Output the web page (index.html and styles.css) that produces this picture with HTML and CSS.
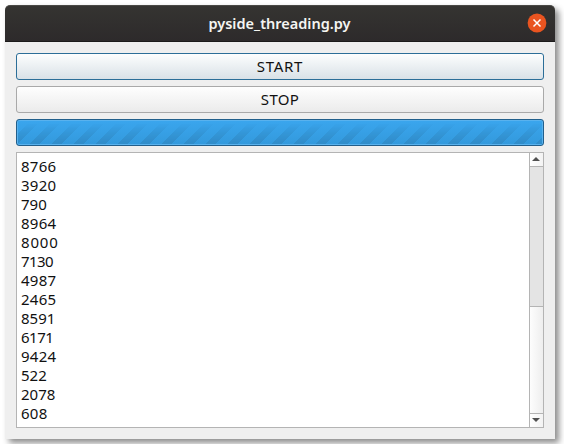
FILE: index.html
```html
<!DOCTYPE html>
<html lang="en">
<head>
<meta charset="utf-8">
<title>pyside_threading.py</title>
<link rel="stylesheet" href="styles.css">
</head>
<body>
<main class="window">
  <header class="titlebar">
    <h1 class="title">pyside_threading.py</h1>
    <button class="close" aria-label="Close"><svg width="20" height="20" viewBox="0 0 20 20"><circle cx="10" cy="10" r="9.4" fill="#e95420"/><path d="M6.5 6.5l7 7M13.5 6.5l-7 7" stroke="#fff" stroke-width="1.5" fill="none"/></svg></button>
  </header>
  <section class="content">
    <button class="button focused">START</button>
    <button class="button">STOP</button>
    <div class="progress"><div class="stripes"></div></div>
    <div class="log">
      <div class="lines">
        <div>8766</div>
        <div>3920</div>
        <div class="tight">790</div>
        <div>8964</div>
        <div class="wide">8000</div>
        <div class="tighter">7130</div>
        <div>4987</div>
        <div>2465</div>
        <div class="tight">8591</div>
        <div class="tightest">6171</div>
        <div>9424</div>
        <div class="tight">522</div>
        <div class="tight">2078</div>
        <div>608</div>
      </div>
      <div class="scrollbar">
        <div class="arrow up"><svg width="8" height="4" viewBox="0 0 8 4"><path d="M0 4L4 0l4 4z" fill="#505050"/></svg></div>
        <div class="groove"></div>
        <div class="handle"></div>
        <div class="arrow down"><svg width="8" height="4" viewBox="0 0 8 4"><path d="M0 0l4 4 4-4z" fill="#505050"/></svg></div>
      </div>
    </div>
  </section>
</main>
</body>
</html>
```
FILE: styles.css
```css
* { box-sizing: border-box; }
body {
  margin: 0;
  padding: 5px;
  background: #fff;
  overflow: hidden;
  font-family: "Noto Sans", sans-serif;
  font-size: 15px;
  color: #111;
}
.window {
  display: flex;
  flex-direction: column;
  width: 550px;
  height: 434px;
  background: #efefef;
  border-radius: 5px 5px 0 0;
  box-shadow: 4px 4px 6px rgba(0, 0, 0, .45);
}
.titlebar {
  display: grid;
  grid-template-columns: 28px 1fr 28px;
  align-items: center;
  height: 37px;
  border-radius: 5px 5px 0 0;
  border-top: 1px solid #4a4945;
  border-bottom: 1px solid #1c1b1b;
  background: linear-gradient(#353431, #2d2a2b);
}
.title {
  grid-column: 2;
  margin: 0 1px 2px 0;
  text-align: center;
  color: #f5f5f2;
  font-size: 14.5px;
  font-weight: 600;
  line-height: 20px;
}
.close {
  display: block;
  width: 20px;
  height: 20px;
  padding: 0;
  margin-top: -2px;
  border: 0;
  background: none;
}
.close svg { display: block; }
.content {
  flex: 1;
  display: flex;
  flex-direction: column;
  gap: 6px;
  padding: 11px;
}
.button {
  height: 27px;
  padding: 0;
  border: 1px solid #a9a9a9;
  border-radius: 3px;
  background: linear-gradient(#fefefe, #ebebeb);
  font: inherit;
  line-height: 25px;
  letter-spacing: .3px;
  color: inherit;
}
.focused {
  border-color: #2c6e98;
  background: linear-gradient(#fdfefe, #d9e1e7);
  letter-spacing: .7px;
}
.progress {
  height: 27px;
  border: 1px solid #225f8b;
  border-radius: 3px;
  background: linear-gradient(#3aa6ee, #3399dc);
  box-shadow: inset 0 0 0 1px #59b2ee;
}
.stripes {
  height: 24px;
  margin: 0 1px;
  background: linear-gradient(135deg, #318cc9 0 4.5%, transparent 4.5% 31.8%, #318cc9 31.8% 54.5%, transparent 54.5% 81.8%, #318cc9 81.8%) 0 0 / 22px 22px;
  mask-image: linear-gradient(transparent 15%, #000 100%);
}
.log {
  flex: 1;
  display: flex;
  border: 1px solid #b4b4b4;
  background: #fff;
}
.lines {
  flex: 1;
  padding: 4px;
  line-height: 19px;
  letter-spacing: .25px;
}
.tight { letter-spacing: 0; }
.tighter { letter-spacing: -.6px; }
.tightest { letter-spacing: -.5px; }
.wide { letter-spacing: .8px; }
.scrollbar {
  display: flex;
  flex-direction: column;
  width: 14px;
  border-left: 1px solid #b4b4b4;
}
.arrow {
  display: flex;
  align-items: center;
  justify-content: center;
  height: 14px;
  padding-right: 1px;
  background: linear-gradient(90deg, #fff, #f3f3f3);
}
.arrow svg { display: block; }
.up { padding-bottom: 1px; border-bottom: 1px solid #b4b4b4; }
.down { padding-bottom: 1px; border-top: 1px solid #b4b4b4; }
.groove {
  height: 140px;
  border-bottom: 1px solid #b4b4b4;
  background: #e4e4e4;
}
.handle {
  flex: 1;
  background: linear-gradient(90deg, #fdfdfd, #eee);
}
```
